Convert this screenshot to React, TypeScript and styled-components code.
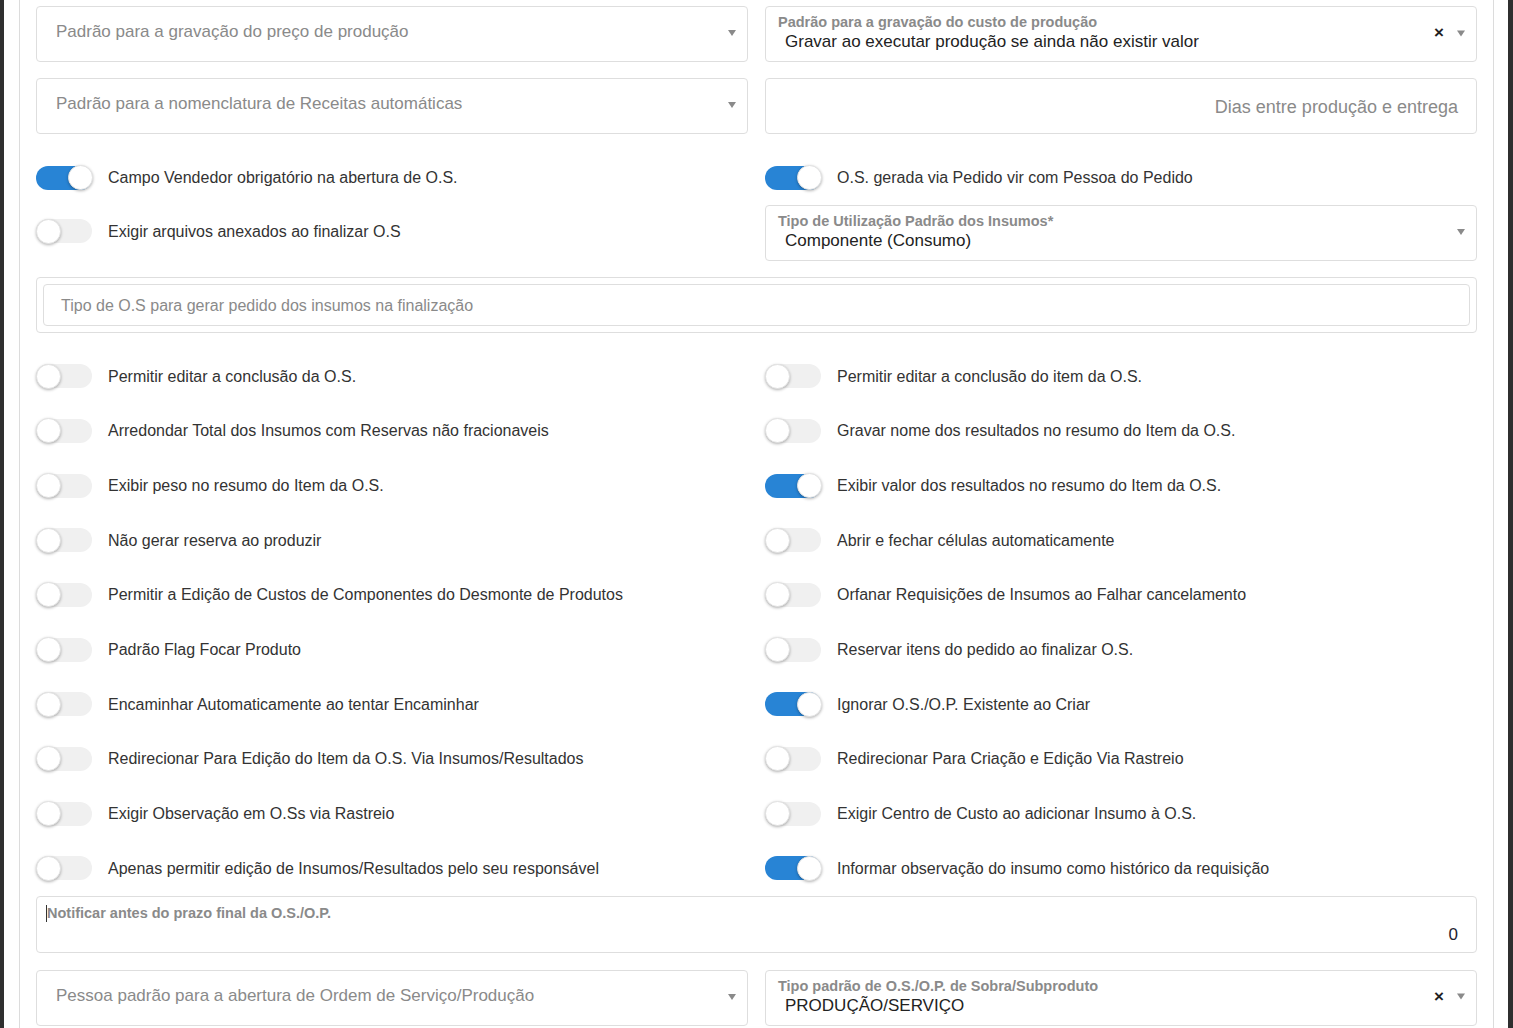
import React from "react";
import styled, { createGlobalStyle } from "styled-components";

const GlobalStyle = createGlobalStyle`
  html, body {
    margin: 0;
    padding: 0;
    background: #2f2f2f;
    font-family: "Liberation Sans", Arial, sans-serif;
    overflow: hidden;
  }
  * { box-sizing: border-box; }
`;

const Outer = styled.div`
  margin: 0 5px 0 4px;
  background: #fff;
  padding: 0 14px 0 15px;
  height: 100vh;
`;

const Panel = styled.div`
  border-left: 1px solid #dcdcdc;
  border-right: 1px solid #dcdcdc;
  padding: 6px 16px 0 16px;
  height: 100%;
`;

const Grid = styled.div<{ $gap?: number; $mb?: number; $rows?: string }>`
  display: grid;
  grid-template-columns: 1fr 1fr;
  column-gap: 17px;
  row-gap: ${(p) => p.$gap ?? 0}px;
  margin-bottom: ${(p) => p.$mb ?? 0}px;
  ${(p) => (p.$rows ? `grid-auto-rows: ${p.$rows};` : "")}
`;

const FieldBox = styled.div<{ $h?: number }>`
  position: relative;
  height: ${(p) => p.$h ?? 56}px;
  border: 1px solid #dedede;
  border-radius: 4px;
  background: #fff;
  display: flex;
  align-items: center;
`;

const Placeholder = styled.span<{ $size?: number; $right?: boolean }>`
  flex: 1;
  padding: 0 ${(p) => (p.$right ? "18px" : "40px")} 0 19px;
  font-size: ${(p) => p.$size ?? 17}px;
  color: #8a8a8a;
  text-align: ${(p) => (p.$right ? "right" : "left")};
  white-space: nowrap;
  margin-top: ${(p) => (p.$right ? "2px" : "-4px")};
`;

const LabeledBody = styled.div`
  flex: 1;
  display: flex;
  flex-direction: column;
  align-self: stretch;
  padding: 7px 60px 0 12px;
`;

const SmallLabel = styled.span`
  font-size: 14.5px;
  font-weight: bold;
  color: #8a8a8a;
  line-height: 16px;
  white-space: nowrap;
`;

const Value = styled.span`
  font-size: 17px;
  color: #222;
  padding-left: 7px;
  line-height: 22px;
  margin-top: 1px;
  white-space: nowrap;
`;

const Controls = styled.div`
  position: absolute;
  right: 11px;
  top: 50%;
  transform: translateY(-50%);
  display: flex;
  align-items: center;
  gap: 13px;
`;

const Clear = styled.span`
  font-size: 17px;
  font-weight: bold;
  color: #222;
  line-height: 1;
  margin-top: -4px;
`;

const Arrow = styled.span`
  width: 0;
  height: 0;
  border-left: 4.5px solid transparent;
  border-right: 4.5px solid transparent;
  border-top: 6px solid #8a8a8a;
  margin-top: -2px;
`;

const WideBox = styled.div`
  border: 1px solid #dedede;
  border-radius: 4px;
  padding: 6px;
  height: 56px;
  margin-bottom: 16px;
`;

const WideInput = styled.div`
  height: 42px;
  border: 1px solid #dedede;
  border-radius: 4px;
  display: flex;
  align-items: center;
  padding-left: 17px;
  font-size: 16px;
  color: #8a8a8a;
  padding-top: 2px;
`;

const ToggleRow = styled.div<{ $h?: number }>`
  display: flex;
  align-items: center;
  gap: 16px;
  ${(p) => (p.$h ? `height: ${p.$h}px;` : "")}
`;

const Track = styled.span<{ $on: boolean }>`
  position: relative;
  flex: none;
  width: 56px;
  height: 24px;
  border-radius: 12px;
  background: ${(p) => (p.$on ? "#2884d5" : "#f0f0f0")};
`;

const Thumb = styled.span<{ $on: boolean }>`
  position: absolute;
  left: ${(p) => (p.$on ? "32px" : "0")};
  width: 25px;
  height: 25px;
  top: -0.5px;
  border-radius: 50%;
  background: #fff;
  border: 1px solid #e2e2e2;
  box-shadow: 0 1px 3px rgba(0, 0, 0, 0.3);
`;

const ToggleText = styled.span`
  font-size: 16px;
  color: #333;
  white-space: nowrap;
  margin-top: 1px;
`;

const NotifyBox = styled.div`
  height: 57px;
  border: 1px solid #dedede;
  border-radius: 4px;
  margin-bottom: 17px;
  padding: 8px 18px 0 9px;
  display: flex;
  flex-direction: column;
`;

const NotifyLabel = styled.span`
  font-size: 14.5px;
  font-weight: bold;
  color: #8a8a8a;
  line-height: 16px;
  display: flex;
  align-items: center;
`;

const Caret = styled.span`
  width: 1px;
  height: 17px;
  background: #333;
`;

const NotifyValue = styled.span`
  align-self: flex-end;
  font-size: 17px;
  color: #1d2230;
  margin-top: 3px;
`;

const Toggle = ({ on, label, h }: { on?: boolean; label: string; h?: number }) => (
  <ToggleRow $h={h}>
    <Track $on={!!on}>
      <Thumb $on={!!on} />
    </Track>
    <ToggleText>{label}</ToggleText>
  </ToggleRow>
);

const SelectPlaceholder = ({ text }: { text: string }) => (
  <FieldBox>
    <Placeholder>{text}</Placeholder>
    <Controls>
      <Arrow />
    </Controls>
  </FieldBox>
);

const SelectLabeled = ({ label, value, clear }: { label: string; value: string; clear?: boolean }) => (
  <FieldBox>
    <LabeledBody>
      <SmallLabel>{label}</SmallLabel>
      <Value>{value}</Value>
    </LabeledBody>
    <Controls>
      {clear && <Clear>×</Clear>}
      <Arrow />
    </Controls>
  </FieldBox>
);

const toggles: [string, boolean][] = [
  ["Permitir editar a conclusão da O.S.", false],
  ["Permitir editar a conclusão do item da O.S.", false],
  ["Arredondar Total dos Insumos com Reservas não fracionaveis", false],
  ["Gravar nome dos resultados no resumo do Item da O.S.", false],
  ["Exibir peso no resumo do Item da O.S.", false],
  ["Exibir valor dos resultados no resumo do Item da O.S.", true],
  ["Não gerar reserva ao produzir", false],
  ["Abrir e fechar células automaticamente", false],
  ["Permitir a Edição de Custos de Componentes do Desmonte de Produtos", false],
  ["Orfanar Requisições de Insumos ao Falhar cancelamento", false],
  ["Padrão Flag Focar Produto", false],
  ["Reservar itens do pedido ao finalizar O.S.", false],
  ["Encaminhar Automaticamente ao tentar Encaminhar", false],
  ["Ignorar O.S./O.P. Existente ao Criar", true],
  ["Redirecionar Para Edição do Item da O.S. Via Insumos/Resultados", false],
  ["Redirecionar Para Criação e Edição Via Rastreio", false],
  ["Exigir Observação em O.Ss via Rastreio", false],
  ["Exigir Centro de Custo ao adicionar Insumo à O.S.", false],
  ["Apenas permitir edição de Insumos/Resultados pelo seu responsável", false],
  ["Informar observação do insumo como histórico da requisição", true],
];

export default function App() {
  return (
    <>
      <GlobalStyle />
      <Outer>
        <Panel>
          <Grid $gap={16} $mb={16}>
            <SelectPlaceholder text="Padrão para a gravação do preço de produção" />
            <SelectLabeled
              label="Padrão para a gravação do custo de produção"
              value="Gravar ao executar produção se ainda não existir valor"
              clear
            />
            <SelectPlaceholder text="Padrão para a nomenclatura de Receitas automáticas" />
            <FieldBox>
              <Placeholder $right $size={18}>Dias entre produção e entrega</Placeholder>
            </FieldBox>
          </Grid>

          <Grid $mb={16}>
            <Toggle on h={55} label="Campo Vendedor obrigatório na abertura de O.S." />
            <Toggle on h={55} label="O.S. gerada via Pedido vir com Pessoa do Pedido" />
            <Toggle h={52} label="Exigir arquivos anexados ao finalizar O.S" />
            <SelectLabeled label="Tipo de Utilização Padrão dos Insumos*" value="Componente (Consumo)" />
          </Grid>

          <WideBox>
            <WideInput>Tipo de O.S para gerar pedido dos insumos na finalização</WideInput>
          </WideBox>

          <Grid $rows="54.67px">
            {toggles.map(([label, on]) => (
              <Toggle key={label} on={on} label={label} />
            ))}
          </Grid>

          <NotifyBox>
            <NotifyLabel>
              <Caret />
              Notificar antes do prazo final da O.S./O.P.
            </NotifyLabel>
            <NotifyValue>0</NotifyValue>
          </NotifyBox>

          <Grid>
            <SelectPlaceholder text="Pessoa padrão para a abertura de Ordem de Serviço/Produção" />
            <SelectLabeled
              label="Tipo padrão de O.S./O.P. de Sobra/Subproduto"
              value="PRODUÇÃO/SERVIÇO"
              clear
            />
          </Grid>
        </Panel>
      </Outer>
    </>
  );
}
